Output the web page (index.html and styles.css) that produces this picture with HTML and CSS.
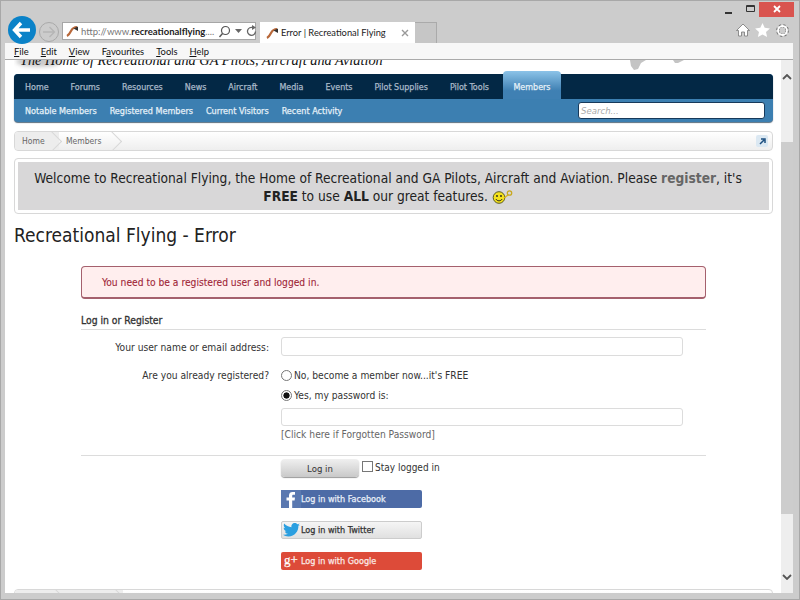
FILE: index.html
```html
<!DOCTYPE html>
<html lang="en">
<head>
<meta charset="utf-8">
<title>Error | Recreational Flying</title>
<link rel="stylesheet" href="styles.css">
</head>
<body>
<div class="window">
  <div class="caption">
    <svg class="cap-min" width="7" height="3" viewBox="0 0 7 3"><rect width="7" height="2" y="1" fill="#333"/></svg>
    <svg class="cap-max" width="9" height="7" viewBox="0 0 9 7"><path d="M.5 .5h8v6h-8z M.5 1.500h8" fill="none" stroke="#333"/></svg>
    <div class="cap-close"><svg width="10" height="10" viewBox="0 0 10 10"><path d="M2 2l6 6M8 2l-6 6" stroke="#fff" stroke-width="1.800"/></svg></div>
  </div>
  <div class="toolbar">
    <div class="back"><svg width="20" height="18" viewBox="0 0 20 18"><path d="M9 2L2.500 9 9 16M3 9h15" fill="none" stroke="#fff" stroke-width="3.400"/></svg></div>
    <div class="forward"><svg width="14" height="12" viewBox="0 0 14 12"><path d="M7.500 1l5 5-5 5M12 6H1" fill="none" stroke="#b5b5b5" stroke-width="1.300"/></svg></div>
    <div class="address">
      <svg class="favicon" width="14" height="12" viewBox="0 0 14 12"><path d="M2 11C4 10 5 8 6 6S8 2 12 2" fill="none" stroke="#b8683a" stroke-width="2.200"/><path d="M8.500 3.500L13 1.500V6z" fill="#333"/></svg>
      <span class="url">http://www.<b>recreationalflying</b>....</span>
      <svg class="addr-ico" width="13" height="13" viewBox="0 0 13 13"><circle cx="7.500" cy="5.500" r="4" fill="none" stroke="#555" stroke-width="1.200"/><path d="M4.500 8.500L1.500 12" stroke="#555" stroke-width="1.400"/></svg>
      <svg class="addr-ico" width="7" height="4" viewBox="0 0 7 4"><path d="M0 0h7L3.500 4z" fill="#666"/></svg>
      <svg class="addr-ico" width="11" height="12" viewBox="0 0 11 12"><path d="M9.500 6.500A4 4 0 1 1 7 2.600" fill="none" stroke="#666" stroke-width="1.300"/><path d="M6 0l4 2.500L6 5z" fill="#666"/></svg>
    </div>
    <div class="tab">
      <svg class="favicon" width="14" height="12" viewBox="0 0 14 12"><path d="M2 11C4 10 5 8 6 6S8 2 12 2" fill="none" stroke="#b8683a" stroke-width="2.200"/><path d="M8.500 3.500L13 1.500V6z" fill="#333"/></svg>
      <span class="tab-title">Error | Recreational Flying</span>
      <svg class="tab-x" width="8" height="8" viewBox="0 0 8 8"><path d="M1 1l6 6M7 1L1 7" stroke="#999" stroke-width="1.400"/></svg>
    </div>
    <div class="newtab"></div>
    <div class="tools">
      <svg width="14" height="14" viewBox="0 0 14 14"><path d="M7 1L0.500 7.500H2.500V13H5.500V9H8.500V13H11.500V7.500H13.500z" fill="#fff" stroke="#777" stroke-width=".8"/></svg>
      <svg width="15" height="14" viewBox="0 0 15 14"><path d="M7.500 0l2.200 4.800 5.200.6-3.900 3.500 1.100 5.100-4.600-2.600-4.600 2.600 1.100-5.100L.1 5.400l5.200-.6z" fill="#fff"/></svg>
      <svg width="15" height="15" viewBox="0 0 15 15"><circle cx="7.500" cy="7.500" r="4.700" fill="none" stroke="#777" stroke-width="3.400" stroke-dasharray="1.900 1.800"/><circle cx="7.500" cy="7.500" r="4.500" fill="none" stroke="#fff" stroke-width="1.800"/></svg>
    </div>
  </div>
  <div class="menubar">
    <span><u>F</u>ile</span><span><u>E</u>dit</span><span><u>V</u>iew</span><span>F<u>a</u>vourites</span><span><u>T</u>ools</span><span><u>H</u>elp</span>
  </div>
  <div class="viewport">
    <div class="page">
      <div class="logo-strip">
        <span class="smudge"></span>
        <span class="tagline">The Home of Recreational and GA Pilots, Aircraft and Aviation</span>
        <svg class="logo-plane" width="60" height="11" viewBox="0 0 60 11"><path d="M1 0h16l-5 3-3 6-4 1-3-4zM44 0h11l-6 3h-3z" fill="#c4c4c4"/></svg>
      </div>
      <nav class="nav">
        <div class="nav-main">
          <a>Home</a><a>Forums</a><a>Resources</a><a>News</a><a>Aircraft</a><a>Media</a><a>Events</a><a>Pilot Supplies</a><a>Pilot Tools</a><a class="active">Members</a>
        </div>
        <div class="nav-sub">
          <a>Notable Members</a><a>Registered Members</a><a>Current Visitors</a><a>Recent Activity</a>
          <div class="search">Search...</div>
        </div>
      </nav>
      <div class="crumbs">
        <span class="crumb">Home</span><span class="crumb">Members</span>
        <span class="crumb-link"><svg width="7" height="7" viewBox="0 0 7 7"><path d="M1 6l4-4M2 1h4v4" fill="none" stroke="#1d4f80" stroke-width="1.500"/></svg></span>
      </div>
      <div class="notice">
        <div class="notice-inner">Welcome to Recreational Flying, the Home of Recreational and GA Pilots, Aircraft and Aviation. Please <b class="reg">register</b>, it's <b>FREE</b> to use <b>ALL</b> our great features. <svg class="smiley" width="21" height="14" viewBox="0 0 21 14"><circle cx="7" cy="7.500" r="5.800" fill="#f5e21c" stroke="#5b5b20"/><circle cx="5" cy="6" r=".9" fill="#222"/><circle cx="9" cy="6" r=".9" fill="#222"/><path d="M3.800 9c1.600 2.400 4.800 2.400 6.400 0" fill="none" stroke="#222"/><path d="M12 8l4-3" stroke="#d8b820" stroke-width="1.500"/><circle cx="17.500" cy="3" r="2.200" fill="none" stroke="#c8a820" stroke-width="1.300"/></svg></div>
      </div>
      <h1 class="title">Recreational Flying - Error</h1>
      <div class="content">
        <div class="error">You need to be a registered user and logged in.</div>
        <h2 class="form-head">Log in or Register</h2>
        <div class="form-row first">
          <label class="form-label">Your user name or email address:</label>
          <div class="form-field"><div class="input"></div></div>
        </div>
        <div class="form-row second">
          <label class="form-label">Are you already registered?</label>
          <div class="form-field">
            <div class="radio-line"><span class="radio"></span>No, become a member now...it's FREE</div>
            <div class="radio-line yes"><span class="radio on"></span>Yes, my password is:</div>
            <div class="input pw"></div>
            <div class="forgot">[Click here if Forgotten Password]</div>
          </div>
        </div>
        <div class="form-row submit">
          <div class="form-label"></div>
          <div class="form-field">
            <div class="login-line"><span class="login-btn">Log in</span><span class="check"></span><span class="stay">Stay logged in</span></div>
            <div class="social fb"><span class="s-ico"><svg width="12" height="17" viewBox="0 0 12 17"><path d="M4 17V9.500H1.500V6.500H4V4.500C4 2 5.500 1 7.500 1H10V3.800H8.500C7.500 3.800 7.200 4.300 7.200 5V6.500H10L9.600 9.500H7.200V17z" fill="#fff"/></svg></span>Log in with Facebook</div>
            <div class="social tw"><span class="s-ico"><svg width="17" height="14" viewBox="0 0 17 14"><path d="M17 1.700c-.6.300-1.300.5-2 .6.700-.4 1.300-1.100 1.500-1.900-.7.400-1.400.7-2.200.9C13.700.5 12.800 0 11.800 0 9.600 0 8 2 8.500 4.200 5.600 4.100 3 2.700 1.200.6.300 2.200.8 4.200 2.300 5.200c-.6 0-1.100-.2-1.600-.4 0 1.600 1.100 3.100 2.800 3.500-.5.100-1 .2-1.600.1.400 1.400 1.700 2.400 3.300 2.400C3.400 11.500 1.700 12 0 11.800 1.600 12.900 3.400 13.500 5.400 13.500c6.500 0 10.200-5.500 10-10.400.6-.4 1.200-1 1.600-1.400z" fill="#2b9fe0"/></svg></span>Log in with Twitter</div>
            <div class="social gp"><span class="s-ico gplus">g+</span>Log in with Google</div>
          </div>
        </div>
      </div>
      <div class="crumbs bottom"><span class="crumb"></span><span class="crumb wide"></span></div>
    </div>
    <div class="scrollbar">
      <svg class="arrow" width="10" height="6" viewBox="0 0 10 6"><path d="M1 5l4-4 4 4" fill="none" stroke="#555" stroke-width="1.800"/></svg>
      <div class="thumb"></div>
      <svg class="arrow down" width="10" height="6" viewBox="0 0 10 6"><path d="M1 1l4 4 4-4" fill="none" stroke="#555" stroke-width="1.800"/></svg>
    </div>
  </div>
</div>
</body>
</html>
```
FILE: styles.css
```css
* { box-sizing: border-box; }
html, body { margin: 0; height: 100%; overflow: hidden; }
body { font-family: "DejaVu Sans Condensed", "DejaVu Sans", sans-serif; background: #ccc; }
.window { width: 800px; height: 600px; background: #ccc; border: 1px solid #a8a8a8; display: flex; flex-direction: column; padding: 0 6px 6px 4px; overflow: hidden; }

.caption { height: 17px; margin-right: -1px; display: flex; justify-content: flex-end; align-items: center; flex: none; }
.cap-min { margin-right: 14px; margin-top: 6px; }
.cap-max { margin-right: 4px; margin-top: -2px; }
.cap-close { width: 35px; height: 15px; background: #d9544f; display: flex; align-items: center; justify-content: center; margin-top: -1px; }

.toolbar { height: 25px; display: flex; align-items: flex-start; flex: none; font-family: Lato, sans-serif; position: relative; }
.back { width: 28px; height: 28px; border-radius: 50%; background: #0a82c8; display: flex; align-items: center; justify-content: center; margin: -2px 0 0 3px; position: relative; z-index: 2; flex: none; }
.forward { width: 20px; height: 20px; border: 1px solid #a9a9a9; border-radius: 50%; display: flex; align-items: center; justify-content: center; margin: 4px 0 0 3px; flex: none; }
.address { width: 194px; height: 18px; background: #fff; border: 1px solid #a6a6a6; display: flex; align-items: center; margin: 4px 0 0 3px; padding: 0 4px 0 2px; flex: none; }
.favicon { flex: none; margin-right: 2px; }
.url { font-size: 9.5px; color: #777; white-space: nowrap; flex: 1; }
.url b { color: #222; font-weight: 700; }
.addr-ico { margin-left: 4px; flex: none; }
.tab { width: 155px; height: 21px; background: #fff; display: flex; align-items: center; margin: 4px 0 0 4px; padding: 0 6px 0 5px; flex: none; }
.tab-title { font-size: 9.3px; color: #222; flex: 1; white-space: nowrap; }
.tab-x { flex: none; }
.newtab { width: 22px; height: 21px; background: #c6c6c6; border: 1px solid #aaa; border-bottom: 0; border-left: 0; margin-top: 4px; flex: none; }
.tools { margin-left: auto; display: flex; gap: 5px; align-items: center; height: 20px; margin-top: 2px; padding-right: 3px; }

.menubar { height: 17px; background: #f7f7f7; border-bottom: 1px solid #aaa; display: flex; gap: 12px; align-items: center; padding-left: 9px; font: 9.4px Lato, sans-serif; color: #111; flex: none; }
.menubar span { white-space: nowrap; }

.viewport { flex: 1; min-height: 0; display: flex; background: #fff; overflow: hidden; }
.page { flex: 1; min-width: 0; padding: 0 8px 0 9px; overflow: hidden; }
.scrollbar { width: 12px; background: #eee; display: flex; flex-direction: column; align-items: center; flex: none; padding-top: 14px; }
.arrow { flex: none; }
.thumb { width: 100%; height: 372px; background: #cdcdcd; margin-top: 62px; flex: none; }
.arrow.down { margin-top: 60px; }

.logo-strip { height: 14px; position: relative; overflow: hidden; }
.smudge { position: absolute; left: 2px; top: -4px; width: 46px; height: 11px; background: #c9c9c9; border-radius: 50%; filter: blur(2px); }
.tagline { position: absolute; left: 6px; top: -8px; font: italic 14.3px "Liberation Serif", serif; color: #111; white-space: nowrap; }
.logo-plane { position: absolute; left: 615px; top: 0; filter: blur(.6px); }

.nav { height: 48px; background: #3c7fb1; border-radius: 4px; display: flex; flex-direction: column; -webkit-text-stroke: .25px; box-shadow: 0 1px 1px #5a6f80; }
.nav-main { height: 25px; background: #032845; border-radius: 4px 4px 0 0; display: flex; align-items: center; padding-left: 11px; gap: 22px; color: #a8b8c8; font-size: 8.9px; position: relative; }
.nav-main a { white-space: nowrap; }
.nav-main .active { position: absolute; left: 489px; top: -3px; width: 58px; height: 28px; border-radius: 4px 4px 0 0; background: linear-gradient(#8cc3e8, #3f80b3 70%); color: #e4f0f8; display: flex; align-items: center; justify-content: center; padding-top: 3px; }
.nav-sub { flex: 1; display: flex; align-items: center; padding-left: 11px; gap: 13px; color: #e4f0f8; font-size: 9px; }
.nav-sub a { white-space: nowrap; }
.search { margin-left: auto; margin-right: 8px; width: 187px; height: 17px; background: #fff; border: 1px solid #17395a; border-radius: 3px; color: #aaa; font-size: 9.5px; font-style: italic; -webkit-text-stroke: 0; padding: 2px; }

.crumbs { margin-top: 9px; height: 20px; border: 1px solid #d8d8d8; border-radius: 4px; background: linear-gradient(#fff, #eee); display: flex; align-items: center; font-size: 8.5px; color: #666; overflow: hidden; }
.crumb { height: 100%; padding-left: 7px; display: flex; align-items: center; position: relative; flex: none; }
.crumb::after { content: ""; position: absolute; right: 0; top: 2px; width: 14px; height: 14px; transform: rotate(45deg); border: 1px solid #d8d8d8; border-left: 0; border-bottom: 0; }
.crumb:first-child { width: 44px; background: #ededed; }
.crumb + .crumb { width: 60px; padding-left: 7px; }
.crumb-link { margin-left: auto; margin-right: 4px; width: 12px; height: 12px; background: #dbe8f2; border-radius: 2px; display: flex; align-items: center; justify-content: center; }

.notice { margin-top: 7px; border: 1px solid #d8d8d8; border-radius: 4px; padding: 3px; height: 56px; }
.notice-inner { height: 48px; background: #d8d7d8; text-align: center; font-size: 13.65px; line-height: 17.5px; color: #222; padding: 8px 16px 0 5px; }
.notice-inner b { font-weight: 700; }
.notice-inner .reg { color: #666; }
.smiley { vertical-align: -3px; }

.title { margin: 9px 0 0; font-size: 19px; font-weight: 400; line-height: 24px; color: #222; }
.content { margin: 19px 67px 0; }
.error { height: 33px; background: #fee; border: 1px solid #a5606d; border-bottom-width: 2px; border-radius: 4px; color: #a02638; font-size: 10.2px; padding: 10px 20px 0; -webkit-text-stroke: .1px; }
.form-head { margin: 15px 0 0; font-size: 10.3px; font-weight: 400; -webkit-text-stroke: .3px; line-height: 13px; border-bottom: 1px solid #dcdcdc; color: #333; height: 16px; }
.form-row { display: flex; font-size: 10.2px; color: #333; }
.form-row.first { margin-top: 7px; }
.form-row.second { margin-top: 10px; padding-bottom: 13px; border-bottom: 1px solid #dcdcdc; }
.form-row.submit { padding-top: 3px; }
.form-label { width: 188px; text-align: right; flex: none; padding-top: 5px; }
.form-row.second .form-label { padding-top: 4px; }
.form-field { margin-left: 12px; flex: 1; min-width: 0; }
.input { width: 402px; height: 19px; border: 1px solid #dcdcdc; border-radius: 3px; background: #fff; }
.radio-line { height: 20px; display: flex; align-items: center; gap: 2px; margin-top: -1px; }
.radio-line.yes { margin-top: 0; }
.radio { width: 11px; height: 11px; border: 1px solid #777; border-radius: 50%; background: #fff; flex: none; }
.radio.on { background: radial-gradient(circle, #111 0 2.8px, #fff 3.4px); }
.input.pw { margin-top: 3px; height: 18px; }
.forgot { margin-top: 2px; line-height: 14px; color: #666; }
.login-line { display: flex; align-items: flex-start; height: 18px; }
.login-btn { width: 78px; height: 18px; background: linear-gradient(#f0f0f0, #c9c9c9); border-radius: 4px; box-shadow: 0 1px 1px #999; display: flex; align-items: center; justify-content: center; font-size: 9.5px; color: #333; }
.check { width: 11px; height: 11px; border: 1px solid #777; background: #fff; margin: 2px 2px 0 3px; flex: none; }
.stay { line-height: 14px; font-size: 10px; margin-top: 2px; }
.social { width: 141px; height: 18px; margin-top: 13px; border-radius: 2px; display: flex; align-items: center; font-size: 9px; -webkit-text-stroke: .25px; }
.s-ico { width: 20px; height: 18px; display: flex; align-items: center; justify-content: center; flex: none; }
.fb { background: #4d6ba6; color: #e8eef8; }
.fb .s-ico { background: #5a78b0; align-items: flex-end; }
.tw { background: linear-gradient(#f5f5f5, #e0e0e0); border: 1px solid #ccc; color: #333; }
.tw .s-ico { margin-left: -1px; }
.gp { background: #dd4b39; color: #fbe9e6; }
.gplus { font: 13px "Liberation Serif", serif; padding-bottom: 3px; color: #fff; }
.crumbs.bottom { margin-top: 19px; }
.crumbs.bottom .crumb:first-child { width: 48px; }
.crumbs.bottom .wide { width: 60px; background: #ededed; }
```
